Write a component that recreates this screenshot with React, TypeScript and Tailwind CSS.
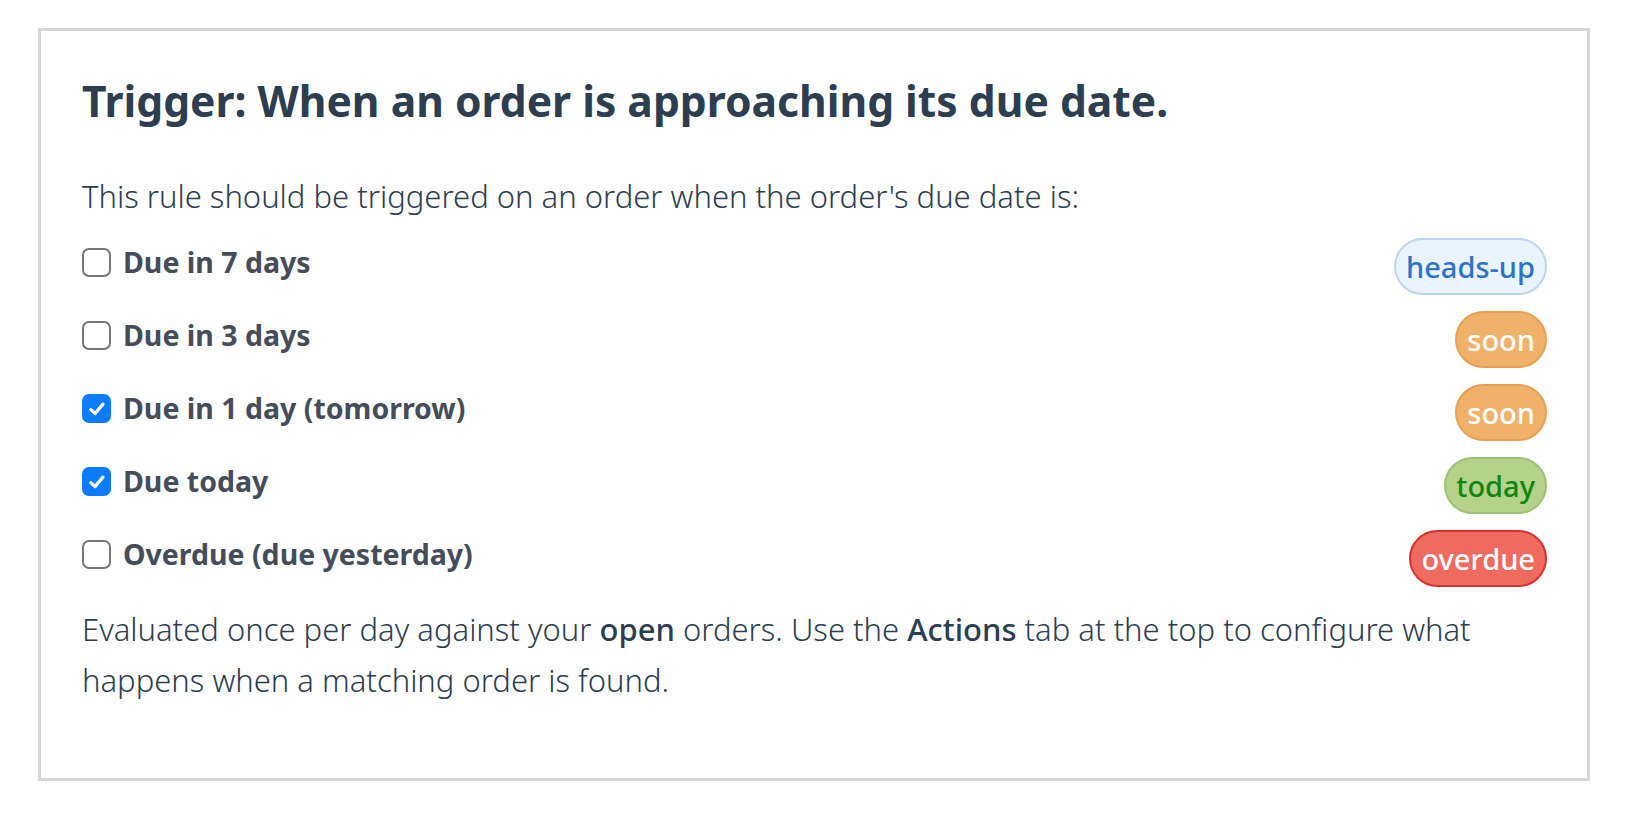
import React from "react";

const rows = [
  { label: "Due in 7 days", checked: false, badge: "heads-up", kind: "info" },
  { label: "Due in 3 days", checked: false, badge: "soon", kind: "soon" },
  { label: "Due in 1 day (tomorrow)", checked: true, badge: "soon", kind: "soon" },
  { label: "Due today", checked: true, badge: "today", kind: "today" },
  { label: "Overdue (due yesterday)", checked: false, badge: "overdue", kind: "overdue" },
];

function Badge({ text, kind }: { text: string; kind: string }) {
  const base = "h-[57px] px-[10px] rounded-full border-2 flex items-center text-[29px] font-medium leading-none";
  if (kind === "info") return <span className={`${base} bg-[#eaf4fe] border-[#bcd6f2] text-[#2b74c8]`}>{text}</span>;
  if (kind === "soon") return <span className={`${base} bg-[#f0b26a] border-[#e9a050] text-white`}>{text}</span>;
  if (kind === "today") return <span className={`${base} bg-[#b4d289] border-[#9cc274] text-[#0e870e]`}>{text}</span>;
  return <span className={`${base} bg-[#ef6a5f] border-[#d9302f] text-white`}>{text}</span>;
}

function Box({ checked }: { checked: boolean }) {
  if (checked)
    return (
      <span className="w-[29px] h-[29px] rounded-[7px] bg-[#0b7cff] flex items-center justify-center shrink-0">
        <svg width="22" height="22" viewBox="0 0 20 20" fill="none">
          <path d="M4.4 10.6 L8.2 14.2 L15.4 5.6" stroke="white" strokeWidth="3" strokeLinecap="round" strokeLinejoin="round" />
        </svg>
      </span>
    );
  return <span className="w-[29px] h-[29px] rounded-[7px] border-2 border-[#767676] bg-white shrink-0" />;
}

export default function App() {
  return (
    <div className="min-h-[818px] bg-white pl-[38px] pt-[28px]" style={{ fontFamily: '"Noto Sans", "Open Sans", sans-serif' }}>
      <div className="w-[1552px] h-[753px] border-[3px] border-[#d6d6d6] pl-[41px] pr-[40px] pt-[41px]">
        <h1 className="text-[42.6px] leading-[56px] font-bold text-[#2c3e50]">Trigger: When an order is approaching its due date.</h1>
        <p className="mt-[42px] text-[31px] leading-[52px] font-light text-[#2c3e50]">This rule should be triggered on an order when the order's due date is:</p>
        <div className="flex flex-col mt-[8px]">
          {rows.map((r) => (
            <div key={r.label} className="h-[73px] flex items-center justify-between">
              <div className="flex items-center gap-[12px] -mt-[8px]">
                <Box checked={r.checked} />
                <span className="text-[28.5px] font-bold text-[#454d5b]">{r.label}</span>
              </div>
              <Badge text={r.badge} kind={r.kind} />
            </div>
          ))}
        </div>
        <p className="mt-[9px] text-[31px] leading-[51px] font-light text-[#2c3e50]">
          Evaluated once per day against your <span className="font-medium">open</span> orders. Use the{" "}
          <span className="font-medium">Actions</span> tab at the top to configure what happens when a matching order is found.
        </p>
      </div>
    </div>
  );
}
